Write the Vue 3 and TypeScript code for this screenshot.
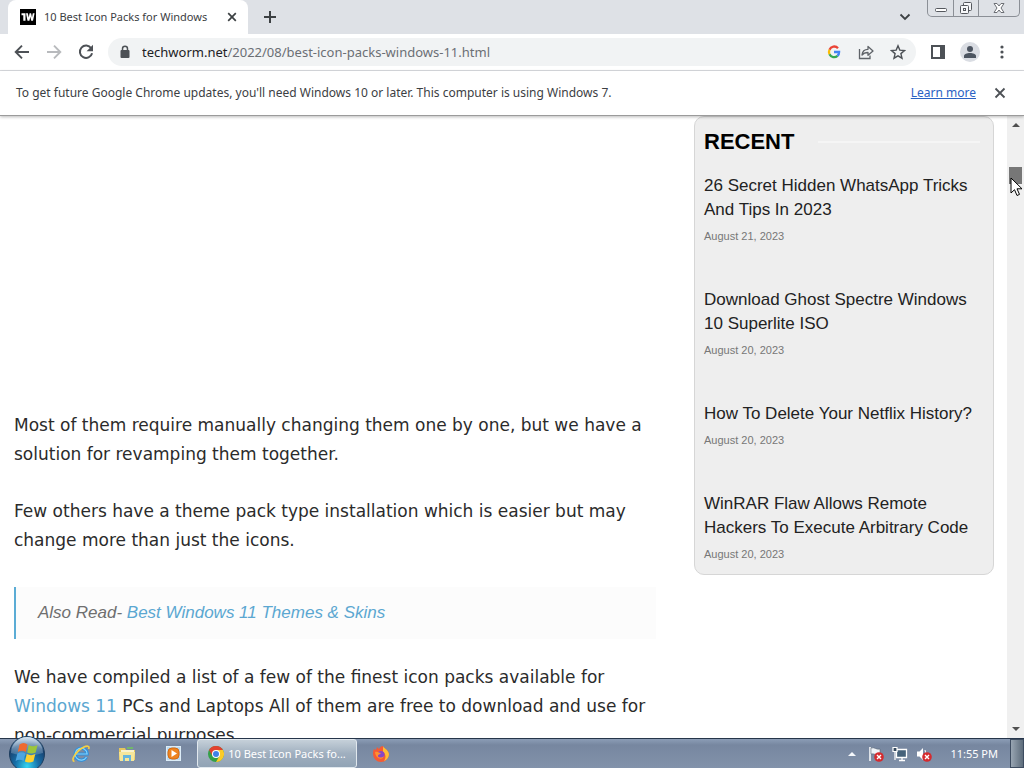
<script setup lang="ts">
interface Post {
  title: string
  date: string
}

const pageTitle = '10 Best Icon Packs for Windows'
const posts: Post[] = [
  { title: '26 Secret Hidden WhatsApp Tricks And Tips In 2023', date: 'August 21, 2023' },
  { title: 'Download Ghost Spectre Windows 10 Superlite ISO', date: 'August 20, 2023' },
  { title: 'How To Delete Your Netflix History?', date: 'August 20, 2023' },
  { title: 'WinRAR Flaw Allows Remote Hackers To Execute Arbitrary Code', date: 'August 20, 2023' },
]
</script>

<template>
  <div class="desktop">
    <header class="tabstrip">
      <div class="tab">
        <svg class="favicon" viewBox="0 0 16 16" aria-hidden="true">
          <rect width="16" height="16" fill="#000" />
          <path d="M1.500 4.200h4v7.600H3.300V6.200H1.500zM6 4.200h1.900l.8 4.400.9-4.400h1.500l.9 4.400.8-4.400h1.800l-1.600 7.600h-1.800l-.9-4-.9 4H7.500z" fill="#fff" />
        </svg>
        <span class="tab-title">{{ pageTitle }}</span>
        <button class="icon-btn tab-close" aria-label="Close tab">
          <svg width="10" height="10" viewBox="0 0 10 10"><path d="M1.200 1.200l7.600 7.600M8.800 1.200L1.200 8.800" stroke="#3c4043" stroke-width="1.700" /></svg>
        </button>
      </div>
      <button class="icon-btn new-tab" aria-label="New tab">
        <svg width="14" height="14" viewBox="0 0 14 14"><path d="M7 1v12M1 7h12" stroke="#3c4043" stroke-width="2" /></svg>
      </button>
      <button class="icon-btn tab-search" aria-label="Search tabs">
        <svg width="12" height="8" viewBox="0 0 12 8"><path d="M1.500 1.500L6 6l4.500-4.500" fill="none" stroke="#3c4043" stroke-width="1.800" /></svg>
      </button>
      <div class="win-buttons">
        <button aria-label="Minimize">
          <svg width="14" height="16" viewBox="0 0 14 16"><rect x="1.500" y="8.500" width="11" height="3" rx="1" fill="#fff" stroke="#55585e" /></svg>
        </button>
        <button aria-label="Restore">
          <svg width="14" height="16" viewBox="0 0 14 16"><g fill="#f6f7f9" stroke="#55585e"><rect x="4.500" y="2.500" width="8" height="8" rx="1" /><rect x="1.500" y="5.500" width="8" height="8" rx="1" /><rect x="4.500" y="8.500" width="2" height="2" /></g></svg>
        </button>
        <button class="win-close" aria-label="Close">
          <svg width="14" height="16" viewBox="0 0 14 16"><path d="M2 3.500h3L7 6l2-2.500h3L9 8l3 4.500H9L7 10l-2 2.500H2L5 8z" fill="#fff" stroke="#6c6f75" /></svg>
        </button>
      </div>
    </header>

    <nav class="toolbar" aria-label="Browser toolbar">
      <button class="icon-btn" aria-label="Back">
        <svg width="16" height="16" viewBox="0 0 16 16"><path d="M15 8H2M8 1.700L1.700 8 8 14.300" fill="none" stroke="#4d5156" stroke-width="1.900" /></svg>
      </button>
      <button class="icon-btn" aria-label="Forward">
        <svg width="16" height="16" viewBox="0 0 16 16"><path d="M1 8h13M8 1.700L14.300 8 8 14.300" fill="none" stroke="#b8babd" stroke-width="1.900" /></svg>
      </button>
      <button class="icon-btn" aria-label="Reload">
        <svg width="16" height="16" viewBox="0 0 16 16"><path d="M13.200 4.200A6.200 6.200 0 1 0 14.100 9.300" fill="none" stroke="#4d5156" stroke-width="2" /><path d="M15 .8v6.400H8.600z" fill="#4d5156" /></svg>
      </button>
      <div class="omnibox">
        <svg width="10" height="14" viewBox="0 0 10 14" aria-hidden="true"><path d="M2.500 6V3.800a2.500 2.500 0 0 1 5 0V6" fill="none" stroke="#4d5156" stroke-width="1.500" /><rect x=".5" y="5" width="9" height="8" rx="1" fill="#4d5156" /></svg>
        <a class="url" href="https://techworm.net/2022/08/best-icon-packs-windows-11.html"><b>techworm.net</b>/2022/08/best-icon-packs-windows-11.html</a>
        <button class="icon-btn" aria-label="Search with Google">
          <svg width="14" height="14" viewBox="0 0 14 14" fill="none" stroke-width="2.300"><path d="M11 3.200A5.100 5.100 0 0 0 2.500 4.700" stroke="#ea4335" /><path d="M2.500 4.700a5.100 5.100 0 0 0 0 4.600" stroke="#fbbc05" /><path d="M2.500 9.300A5.100 5.100 0 0 0 10.500 10.800" stroke="#34a853" /><path d="M10.500 10.800A5.100 5.100 0 0 0 12.100 7H7" stroke="#4285f4" /></svg>
        </button>
        <button class="icon-btn" aria-label="Share this page">
          <svg width="16" height="16" viewBox="0 0 16 16" fill="none" stroke="#5f6368" stroke-width="1.300"><path d="M1.500 5v9.500H12V11.500" /><path d="M4 11c.4-4 2.500-5.700 6-5.700V2.500L15 7l-5 4.300V8.500c-2.600 0-4.500.6-6 2.500z" stroke-linejoin="round" /></svg>
        </button>
        <button class="icon-btn" aria-label="Bookmark this tab">
          <svg width="16" height="16" viewBox="0 0 16 16"><path d="M8 1.800l1.800 4.300 4.700.4-3.600 3.100 1.100 4.600L8 11.800l-4 2.400 1.100-4.600-3.600-3.100 4.700-.4z" fill="none" stroke="#4d5156" stroke-width="1.400" /></svg>
        </button>
      </div>
      <button class="icon-btn" aria-label="Side panel">
        <svg width="14" height="14" viewBox="0 0 14 14"><rect x="1" y="1" width="12" height="12" fill="none" stroke="#4d5156" stroke-width="2" /><rect x="9" y="1" width="4" height="12" fill="#4d5156" /></svg>
      </button>
      <button class="icon-btn avatar" aria-label="Profile">
        <svg width="14" height="14" viewBox="0 0 14 14" fill="#4d5561"><circle cx="7" cy="4" r="3" /><path d="M1 13v-2c0-2 3-3 6-3s6 1 6 3v2z" /></svg>
      </button>
      <button class="icon-btn" aria-label="Menu">
        <svg width="4" height="14" viewBox="0 0 4 14" fill="#4d5156"><circle cx="2" cy="2" r="1.600" /><circle cx="2" cy="7" r="1.600" /><circle cx="2" cy="12" r="1.600" /></svg>
      </button>
    </nav>

    <div class="infobar" role="status">
      <span>To get future Google Chrome updates, you'll need Windows 10 or later. This computer is using Windows 7.</span>
      <a href="#learn">Learn more</a>
      <button class="icon-btn" aria-label="Dismiss">
        <svg width="12" height="12" viewBox="0 0 12 12"><path d="M1.500 1.500l9 9M10.500 1.500l-9 9" stroke="#4d5156" stroke-width="1.800" /></svg>
      </button>
    </div>

    <div class="viewport">
      <main class="article">
        <div class="ad-slot"></div>
        <p>Most of them require manually changing them one by one, but we have a solution for revamping them together.</p>
        <p>Few others have a theme pack type installation which is easier but may change more than just the icons.</p>
        <blockquote>Also Read- <a href="#themes">Best Windows 11 Themes &amp; Skins</a></blockquote>
        <p>We have compiled a list of a few of the finest icon packs available for <a href="#windows-11">Windows 11</a> PCs and Laptops All of them are free to download and use for non-commercial purposes.</p>
      </main>
      <aside class="recent">
        <h2>RECENT</h2>
        <article v-for="post in posts" :key="post.title">
          <h3><a href="#post">{{ post.title }}</a></h3>
          <time>{{ post.date }}</time>
        </article>
      </aside>
      <div class="scrollbar" aria-hidden="true">
        <svg width="8" height="5" viewBox="0 0 8 5"><path d="M0 5l4-4 4 4z" fill="#505050" /></svg>
        <div class="track"><div class="thumb">
          <svg class="cursor" width="14" height="20" viewBox="0 0 14 20"><path d="M1 1v15l3.500-3.300L7 18.500l2.500-1.100L7 11.800h5z" fill="#fff" stroke="#000" /></svg>
        </div></div>
        <svg width="8" height="5" viewBox="0 0 8 5"><path d="M0 0l4 4 4-4z" fill="#505050" /></svg>
      </div>
    </div>

    <footer class="taskbar">
      <button class="start" aria-label="Start">
        <svg width="38" height="38" viewBox="0 0 38 38">
          <defs>
            <radialGradient id="orb" cx=".5" cy=".85" r=".85"><stop offset="0" stop-color="#35d6f2" /><stop offset=".4" stop-color="#176fa8" /><stop offset=".75" stop-color="#18416f" /><stop offset="1" stop-color="#8fb4d0" /></radialGradient>
            <linearGradient id="gloss" x2="0" y2="1"><stop stop-color="#e4eef7" stop-opacity=".85" /><stop offset="1" stop-color="#9dbcd8" stop-opacity=".25" /></linearGradient>
          </defs>
          <circle cx="19" cy="19" r="17.500" fill="url(#orb)" stroke="#1d3d5e" />
          <path d="M3 18a16 16 0 0 1 32 0q-16 5-32 0z" fill="url(#gloss)" />
          <path d="M11.500 9.500q4-3 8 0L17.800 17q-4-2.300-8 0z" fill="#ef6a2e" />
          <path d="M20.800 10q4 2.500 8.700 0l-1.800 7.500q-4.500 2.200-8.500 0z" fill="#9cc63b" />
          <path d="M9.400 18.500q4-2.500 8 0l-1.800 7.500q-4-2.500-8 0z" fill="#4ca5e0" />
          <path d="M18.800 19q4.200 2.300 8.500 0l-1.900 7.500q-4.400 2.200-8.500 0z" fill="#fdd12f" />
        </svg>
      </button>
      <button aria-label="Internet Explorer">
        <svg width="20" height="20" viewBox="0 0 20 20"><path d="M15.500 13a6 6 0 1 1 .7-3H5" fill="none" stroke="#2d8fdd" stroke-width="3.200" /><path d="M15.500 13a6 6 0 1 1 .7-3H5" fill="none" stroke="#87d3fa" stroke-width="1.200" /><path d="M3.500 17.500C-1 17 5 7 12 3.500c4-2 7-2 5.700 1.500" fill="none" stroke="#f5cf45" stroke-width="1.600" /></svg>
      </button>
      <button aria-label="Windows Explorer">
        <svg width="18" height="16" viewBox="0 0 18 16"><path d="M1 2h6l1 2h9v10H1z" fill="#e5c65b" /><path d="M3 4h13v9H3z" fill="#f8f2ce" /><path d="M1 6h16l-1 9H2z" fill="#f6e69a" /><path d="M5 9h8v6h-2v-3H7v3H5z" fill="#66b5dd" /><path d="M9 1h6v2H9z" fill="#70b86a" /></svg>
      </button>
      <button aria-label="Media Player">
        <svg width="16" height="16" viewBox="0 0 16 16"><rect x="1.500" y=".5" width="14" height="14" fill="#b9d9f1" stroke="#dcecf7" /><rect x="3" y="2" width="11" height="11" rx="4" fill="#ee8420" stroke="#d46a12" /><path d="M6.500 4v7L12 7.500z" fill="#fff" /></svg>
      </button>
      <button class="task">
        <svg width="16" height="16" viewBox="0 0 16 16" aria-hidden="true"><circle cx="8" cy="8" r="8" fill="#34a048" /><path d="M1.070 4A8 8 0 0 1 14.930 4H8L4.500 10z" fill="#e2412e" /><path d="M14.930 4A8 8 0 0 1 8 16l3.460-6L8 4z" fill="#fbcb27" /><circle cx="8" cy="8" r="4" fill="#fff" /><circle cx="8" cy="8" r="3" fill="#3f82e8" /></svg>
        <span>10 Best Icon Packs fo...</span>
      </button>
      <button class="firefox" aria-label="Firefox">
        <svg width="18" height="18" viewBox="0 0 18 18"><path d="M2 4l2 1 1-3 2 2c1-2 2-3 4-3 0 2 5 3 6 8a8 8 0 1 1-16 0c0-2 0-3 1-5z" fill="#f45a35" /><path d="M11 1c0 2 5 3 6 8 0 3-2 6-5 7 3-4 1-8-1-9z" fill="#ffbd35" /><circle cx="9" cy="9.500" r="3.500" fill="#8746c8" /><path d="M3 7c3-1 4 1 6 1-1 2-3 1-3 3s4 2 6 0c-1 4-8 4-9-4z" fill="#ff902f" /></svg>
      </button>
      <div class="tray">
        <button aria-label="Show hidden icons"><svg width="8" height="5" viewBox="0 0 8 5"><path d="M0 5l4-4 4 4z" fill="#f5f8fb" /></svg></button>
        <button aria-label="Action Center">
          <svg width="16" height="16" viewBox="0 0 16 16"><path d="M2 1v14" stroke="#fff" stroke-width="1.500" /><path d="M3 2c4-1 5 2 9 1v6c-4 1-5-2-9-1z" fill="#eef3f8" stroke="#4d5967" stroke-width=".5" /><circle cx="11" cy="11" r="4.800" fill="#d52b2f" /><path d="M9 9l4 4m0-4l-4 4" stroke="#fff" stroke-width="1.400" /></svg>
        </button>
        <button aria-label="Network">
          <svg width="16" height="16" viewBox="0 0 16 16"><path d="M4.500 3.500h10v8h-10z" fill="#46627a" stroke="#fff" stroke-width="1.300" /><path d="M7 14.500h6M10 12v2" stroke="#fff" stroke-width="1.300" /><path d="M1 1.500h4v4H1zM3 6v8" fill="#34485c" stroke="#fff" stroke-width="1.200" /></svg>
        </button>
        <button aria-label="Volume muted">
          <svg width="16" height="16" viewBox="0 0 16 16"><path d="M1 5.500h2.500L7 2v12l-3.500-3.500H1z" fill="#fff" /><path d="M9 4q2 4 0 8" fill="none" stroke="#fff" /><circle cx="11" cy="11" r="4.800" fill="#d52b2f" /><path d="M9 9l4 4m0-4l-4 4" stroke="#fff" stroke-width="1.400" /></svg>
        </button>
        <time class="clock">11:55 PM</time>
        <button class="show-desktop" aria-label="Show desktop"></button>
      </div>
    </footer>
  </div>
</template>

<style>
body {
  margin: 0;
}
</style>

<style scoped>
.desktop {
  display: flex;
  flex-direction: column;
  height: 100vh;
  overflow: hidden;
  background: #fff;
  font: 12px/16px "Noto Sans", sans-serif;
  color: #3c4043;
}

button {
  display: flex;
  align-items: center;
  justify-content: center;
  padding: 0;
  border: 0;
  background: none;
  font: inherit;
  color: inherit;
}

a {
  text-decoration: none;
}

.icon-btn {
  flex: none;
  min-width: 16px;
  height: 16px;
}

.tabstrip {
  flex: none;
  display: flex;
  align-items: center;
  height: 34px;
  padding-left: 8px;
  background: #dee1e6;
}

.tab {
  display: flex;
  align-items: center;
  gap: 8px;
  width: 240px;
  height: 34px;
  box-sizing: border-box;
  padding: 0 8px 0 12px;
  border-radius: 8px 8px 0 0;
  background: #fff;
}

.favicon {
  flex: none;
  width: 16px;
  height: 16px;
}

.tab-title {
  flex: 1;
  overflow: hidden;
  font-size: 11px;
  white-space: nowrap;
}

.new-tab {
  margin-left: 14px;
}

.tab-search {
  margin-left: auto;
}

.win-buttons {
  align-self: flex-start;
  display: flex;
  height: 16px;
  margin: 0 4px 0 14px;
  border: 1px solid #8b8f96;
  border-top: 0;
  border-radius: 0 0 5px 5px;
}

.win-buttons button {
  width: 25px;
}

.win-buttons button + button {
  border-left: 1px solid #8b8f96;
}

.win-buttons .win-close {
  width: 41px;
}

.toolbar {
  flex: none;
  display: flex;
  align-items: center;
  gap: 12px;
  height: 36px;
  padding: 0 12px;
  border-bottom: 1px solid #dadce0;
}

.toolbar .icon-btn {
  width: 20px;
  height: 20px;
}

.omnibox {
  flex: 1;
  min-width: 0;
  display: flex;
  align-items: center;
  gap: 12px;
  height: 28px;
  padding: 0 8px 0 12px;
  border-radius: 14px;
  background: #f1f3f4;
}

.url {
  flex: 1;
  overflow: hidden;
  font-size: 13px;
  line-height: 20px;
  white-space: nowrap;
  color: #6b6f74;
}

.url b {
  font-weight: 400;
  color: #202124;
}

.avatar {
  border-radius: 10px;
  background: #dadde3;
}

.infobar {
  z-index: 1;
  flex: none;
  display: flex;
  align-items: center;
  gap: 16px;
  height: 44px;
  padding: 0 16px;
  border-bottom: 1px solid #9b9b9b;
  box-shadow: 0 1px 3px #0004;
}

.infobar span {
  flex: 1;
}

.infobar a {
  color: #2a62c4;
  text-decoration: underline;
}

.viewport {
  flex: 1;
  min-height: 0;
  display: flex;
  align-items: flex-start;
  overflow: hidden;
}

.article {
  flex: 1;
  min-width: 0;
  padding: 0 38px 0 14px;
  font: 17px/29px "DejaVu Sans", sans-serif;
  color: #2b2b2b;
}

.article p {
  margin: 0 0 28px;
}

.article a {
  color: #5ba7d1;
}

.ad-slot {
  height: 295px;
}

.article blockquote {
  margin: 32px 0 24px;
  padding: 11px 22px 12px;
  border-left: 2px solid #5bacd5;
  background: #fcfcfc;
  font: italic 17px/29px "Liberation Sans", sans-serif;
  color: #6f6f6f;
}

.recent {
  flex: none;
  width: 300px;
  box-sizing: border-box;
  margin-right: 13px;
  padding: 13px 9px 11px;
  border: 1px solid #d6d6d6;
  border-radius: 10px;
  background: #eee;
  font-family: "Liberation Sans", sans-serif;
}

.recent h2 {
  display: flex;
  align-items: center;
  gap: 24px;
  margin: 0 4px 20px 0;
  font: 700 22px/24px "Liberation Sans", sans-serif;
  color: #000;
}

.recent h2::after {
  content: "";
  flex: 1;
  height: 2px;
  background: #f5f5f5;
}

.recent article + article {
  margin-top: 43px;
}

.recent h3 {
  margin: 0 0 5px;
  font: 400 17px/24px "Liberation Sans", sans-serif;
}

.recent h3 a {
  color: #222;
}

.recent time {
  display: block;
  font-size: 11px;
  line-height: 18px;
  color: #777;
}

.scrollbar {
  align-self: stretch;
  flex: none;
  display: flex;
  flex-direction: column;
  align-items: center;
  width: 17px;
  box-sizing: border-box;
  padding: 6px 0;
  background: #f0f0f0;
}

.track {
  flex: 1;
  padding-top: 40px;
}

.thumb {
  position: relative;
  width: 13px;
  height: 17px;
  background: #777;
}

.cursor {
  position: absolute;
  left: 1px;
  top: 10px;
}

.taskbar {
  z-index: 1;
  flex: none;
  display: flex;
  align-items: center;
  height: 29px;
  padding-left: 8px;
  border-top: 1px solid #26354a;
  background: linear-gradient(#8c9db6, #7787a0 6px, #8292aa);
  color: #fff;
}

.taskbar > button {
  flex: none;
  width: 46px;
}

.taskbar > .start {
  width: 38px;
  height: 38px;
  margin: -6px 12px -6px 0;
}

.taskbar > .task {
  width: 160px;
  height: 29px;
  gap: 4px;
  box-sizing: border-box;
  margin-left: 1px;
  border: 1px solid #e1e8ee;
  border-radius: 3px;
  background: linear-gradient(#c5d0d9, #a0afbf 50%, #91a3b5);
  font-size: 11px;
  white-space: nowrap;
}

.taskbar > .firefox {
  width: 48px;
}

.tray {
  flex: 1;
  display: flex;
  align-items: center;
  justify-content: flex-end;
  gap: 8px;
  height: 29px;
}

.tray button:first-child {
  margin-right: 4px;
}

.clock {
  margin: 0 4px 0 10px;
  font-size: 11px;
}

.show-desktop {
  width: 14px;
  height: 29px;
  border: 1px solid #3d4c60;
  background: linear-gradient(90deg, #98a5b2, #5d6c7b);
}
</style>
